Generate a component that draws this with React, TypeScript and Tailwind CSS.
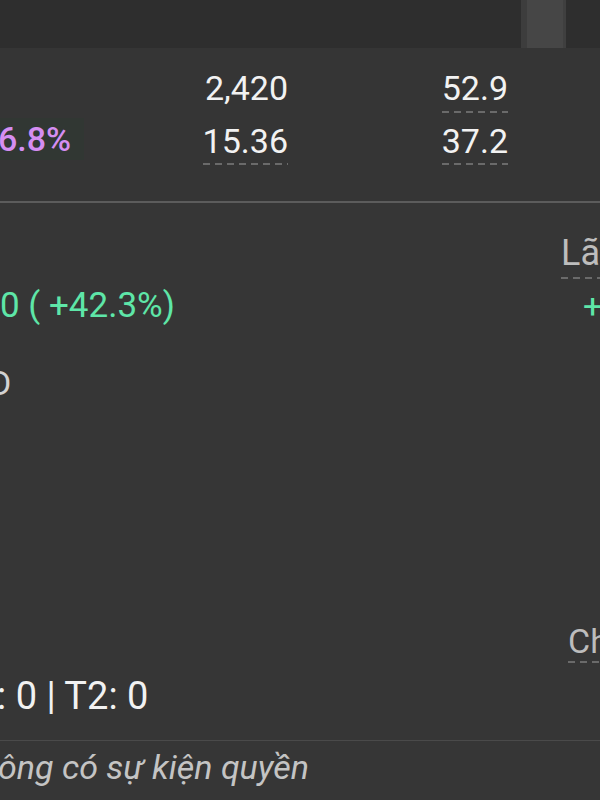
import React from "react";

const Dash = () => (
  <div className="h-[2px] w-full bg-[repeating-linear-gradient(90deg,#6a6a6a_0_7px,transparent_7px_12px)]" />
);

export default function App() {
  return (
    <div className="w-[600px] h-[800px] overflow-hidden bg-[#363636] font-['Roboto',sans-serif] flex flex-col">
      {/* top bar */}
      <div className="h-[48px] shrink-0 bg-[#2e2e2e] flex justify-end">
        <div className="w-[45px] h-full mr-[34px] bg-[#464646] border-l-[6px] border-r-[3px] border-l-[#3d3d3d] border-r-[#3f3f3f]" />
      </div>

      {/* table */}
      <div className="h-[153px] shrink-0 bg-[#353535] flex flex-col pt-[20px] text-[34px] leading-[40px] text-[#f2f2f2]">
        <div className="flex">
          <div className="w-[84px]" />
          <div className="w-[204px] flex justify-end">
            <div className="flex flex-col">
              <span>2,420</span>
            </div>
          </div>
          <div className="w-[220px] flex justify-end">
            <div className="flex flex-col">
              <span>52.9</span>
              <div className="mt-[3px]"><Dash /></div>
            </div>
          </div>
        </div>
        <div className="flex mt-[8px]">
          <div className="w-[84px] -mt-[3px] h-[42px] bg-[#313733] flex items-center">
            <span className="-ml-[2px] font-medium text-[#d58ef2]">6.8%</span>
          </div>
          <div className="w-[204px] flex justify-end">
            <div className="flex flex-col">
              <span>15.36</span>
              <div className="mt-[2px]"><Dash /></div>
            </div>
          </div>
          <div className="w-[220px] flex justify-end">
            <div className="flex flex-col">
              <span>37.2</span>
              <div className="mt-[2px]"><Dash /></div>
            </div>
          </div>
        </div>
      </div>

      <div className="h-[2px] shrink-0 bg-[#5c5c5c]" />

      {/* details */}
      <div className="flex flex-col text-[34px] leading-[40px]">
        <div className="mt-[30px] flex justify-end">
          <div className="w-[39px] flex flex-col">
            <span className="text-[36px] text-[#bdbdbd] whitespace-nowrap">Lãi/lỗ</span>
            <div className="mt-[4px]"><Dash /></div>
          </div>
        </div>
        <div className="mt-[7px] flex justify-between">
          <span className="text-[35px] text-[#5ee6a8] whitespace-nowrap">0 ( +42.3%)</span>
          <span className="w-[17px] overflow-hidden text-[#5ee6a8] whitespace-nowrap">+</span>
        </div>
        <div className="mt-[37px] flex">
          <span className="-ml-[11px] text-[#d2d2d2]">D</span>
        </div>
        <div className="mt-[218px] flex justify-end">
          <div className="w-[32px] flex flex-col">
            <span className="text-[#bdbdbd] whitespace-nowrap">Chi tiết</span>
            <div><Dash /></div>
          </div>
        </div>
        <div className="mt-[13px] flex">
          <span className="-ml-[3px] text-[38px] text-[#f2f2f2] whitespace-nowrap">: 0 | T2: 0</span>
        </div>
        <div className="mt-[24px] h-px bg-[#4a4a4a]" />
        <div className="mt-[6px] flex">
          <span className="-ml-[2px] italic text-[34px] text-[#c4c4c4] whitespace-nowrap">ông có sự kiện quyền</span>
        </div>
      </div>
    </div>
  );
}
